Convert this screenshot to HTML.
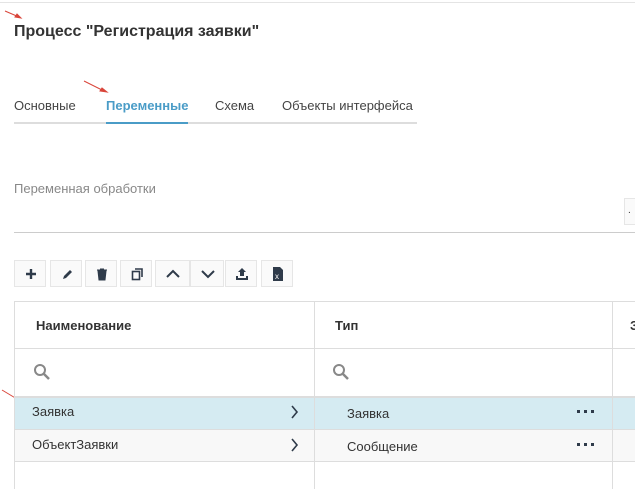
<!DOCTYPE html>
<html><head><meta charset="utf-8"><style>
*{margin:0;padding:0;box-sizing:border-box}
html,body{width:635px;height:489px;overflow:hidden}
body{background:#fff;font-family:"Liberation Sans",sans-serif;color:#333;position:relative}
.a{position:absolute}
.t{font-size:13px;white-space:nowrap}
.btn{position:absolute;top:260px;width:32px;height:27px;border:1px solid #e6e6e6;background:#fafafa}
.btn svg{position:absolute;left:8px;top:6px}
.h{position:absolute;background:#ddd}
</style></head><body>
<div class="h" style="left:0;top:2px;width:635px;height:1px;background:#e4e4e4"></div>
<svg class="a" style="left:0;top:0" width="635" height="489"><g stroke="#d9453a" stroke-width="1" fill="#d9453a">
<line x1="5" y1="11" x2="19" y2="17"/><polygon points="21,18 15,17 17,14"/>
<line x1="84" y1="81" x2="104" y2="91"/><polygon points="107,92 100,91 102,88"/>
<line x1="2" y1="390" x2="22" y2="402"/><polygon points="25,404 18,403 20,400"/></g></svg>
<div class="a" style="left:14px;top:23px;font-size:16px;font-weight:bold;color:#333">Процесс "Регистрация заявки"</div>
<div class="a t" style="left:14px;top:98px;color:#444">Основные</div>
<div class="a t" style="left:106px;top:98px;color:#4a9cc7;font-weight:bold">Переменные</div>
<div class="a t" style="left:215px;top:98px;color:#444">Схема</div>
<div class="a t" style="left:282px;top:98px;color:#444">Объекты интерфейса</div>
<div class="h" style="left:14px;top:122px;width:403px;height:2px;background:#ddd"></div>
<div class="h" style="left:106px;top:122px;width:82px;height:2px;background:#4a9cc7"></div>
<div class="a t" style="left:14px;top:181px;color:#888">Переменная обработки</div>
<div class="a" style="left:624px;top:198px;width:11px;height:27px;border:1px solid #e6e6e6;border-right:none;background:#fafafa;font-size:10px;padding:6px 3px;overflow:hidden">.</div>
<div class="h" style="left:14px;top:232px;width:621px;height:1px;background:#ccc"></div>

<div class="btn" style="left:14px"><svg width="16" height="14"><path d="M8 2v10M3 7h10" stroke="#2f3b4a" stroke-width="2.4"/></svg></div>
<div class="btn" style="left:50px"><svg width="16" height="14"><path d="M4 12l1-3 6-6 2 2-6 6z" fill="#2f3b4a"/></svg></div>
<div class="btn" style="left:85px"><svg width="16" height="14"><path d="M3 3h10M6 2h4M4 4h8l-1 9H5z" fill="#2f3b4a" stroke="#2f3b4a"/></svg></div>
<div class="btn" style="left:120px"><svg width="16" height="14"><rect x="3.5" y="4.5" width="7" height="8" fill="none" stroke="#2f3b4a" stroke-width="1.6"/><path d="M6 2h7v8" fill="none" stroke="#2f3b4a" stroke-width="1.6"/></svg></div>
<div class="btn" style="left:155px;width:35px"><svg width="18" height="14"><path d="M3 10l6-6 6 6" fill="none" stroke="#2f3b4a" stroke-width="2"/></svg></div>
<div class="btn" style="left:190px;width:34px"><svg width="18" height="14"><path d="M3 4l6 6 6-6" fill="none" stroke="#2f3b4a" stroke-width="2"/></svg></div>
<div class="btn" style="left:225px"><svg width="16" height="14"><path d="M8 1l4 4H10v4H6V5H4z M2 9h2v2h8V9h2v4H2z" fill="#2f3b4a"/></svg></div>
<div class="btn" style="left:261px"><svg width="16" height="16" style="top:5px"><path d="M3 1h7l3 3v11H3z" fill="#2f3b4a"/><text x="5" y="13" font-size="8" fill="#fff" font-family="Liberation Sans">x</text></svg></div>

<div class="a" style="left:14px;top:301px;width:621px;height:188px;border:1px solid #ddd;border-bottom:none;border-right:none"></div>
<div class="h" style="left:314px;top:301px;width:1px;height:188px"></div>
<div class="h" style="left:612px;top:301px;width:1px;height:188px"></div>
<div class="h" style="left:14px;top:348px;width:621px;height:1px"></div>
<div class="a" style="left:15px;top:396px;width:620px;height:33px;background:#d5ebf2;border-top:2px solid #ddd"></div>
<div class="a" style="left:15px;top:429px;width:620px;height:33px;background:#f8f8f8;border-top:1px solid #ddd;border-bottom:1px solid #ddd"></div>
<div class="h" style="left:314px;top:396px;width:1px;height:93px"></div>
<div class="h" style="left:612px;top:396px;width:1px;height:93px"></div>
<div class="a t" style="left:36px;top:318px;font-weight:bold">Наименование</div>
<div class="a t" style="left:335px;top:318px;font-weight:bold">Тип</div>
<div class="a t" style="left:630px;top:318px;font-weight:bold;width:5px;overflow:hidden">З</div>
<svg class="a" style="left:33px;top:363px" width="18" height="18"><circle cx="7" cy="7" r="5" fill="none" stroke="#888" stroke-width="2"/><path d="M11 11l5 5" stroke="#888" stroke-width="2.5"/></svg>
<svg class="a" style="left:332px;top:363px" width="18" height="18"><circle cx="7" cy="7" r="5" fill="none" stroke="#888" stroke-width="2"/><path d="M11 11l5 5" stroke="#888" stroke-width="2.5"/></svg>
<div class="a t" style="left:32px;top:404px">Заявка</div>
<div class="a t" style="left:32px;top:437px">ОбъектЗаявки</div>
<div class="a t" style="left:347px;top:406px">Заявка</div>
<div class="a t" style="left:347px;top:439px">Сообщение</div>
<svg class="a" style="left:290px;top:405px" width="10" height="14"><path d="M2 1l5 6-5 6" fill="none" stroke="#2f3b4a" stroke-width="1.6"/></svg>
<svg class="a" style="left:290px;top:438px" width="10" height="14"><path d="M2 1l5 6-5 6" fill="none" stroke="#2f3b4a" stroke-width="1.6"/></svg>
<svg class="a" style="left:576px;top:410px" width="20" height="4"><rect x="1" y="0" width="3" height="3" fill="#2f3b4a"/><rect x="8" y="0" width="3" height="3" fill="#2f3b4a"/><rect x="15" y="0" width="3" height="3" fill="#2f3b4a"/></svg>
<svg class="a" style="left:576px;top:443px" width="20" height="4"><rect x="1" y="0" width="3" height="3" fill="#2f3b4a"/><rect x="8" y="0" width="3" height="3" fill="#2f3b4a"/><rect x="15" y="0" width="3" height="3" fill="#2f3b4a"/></svg>
</body></html>
